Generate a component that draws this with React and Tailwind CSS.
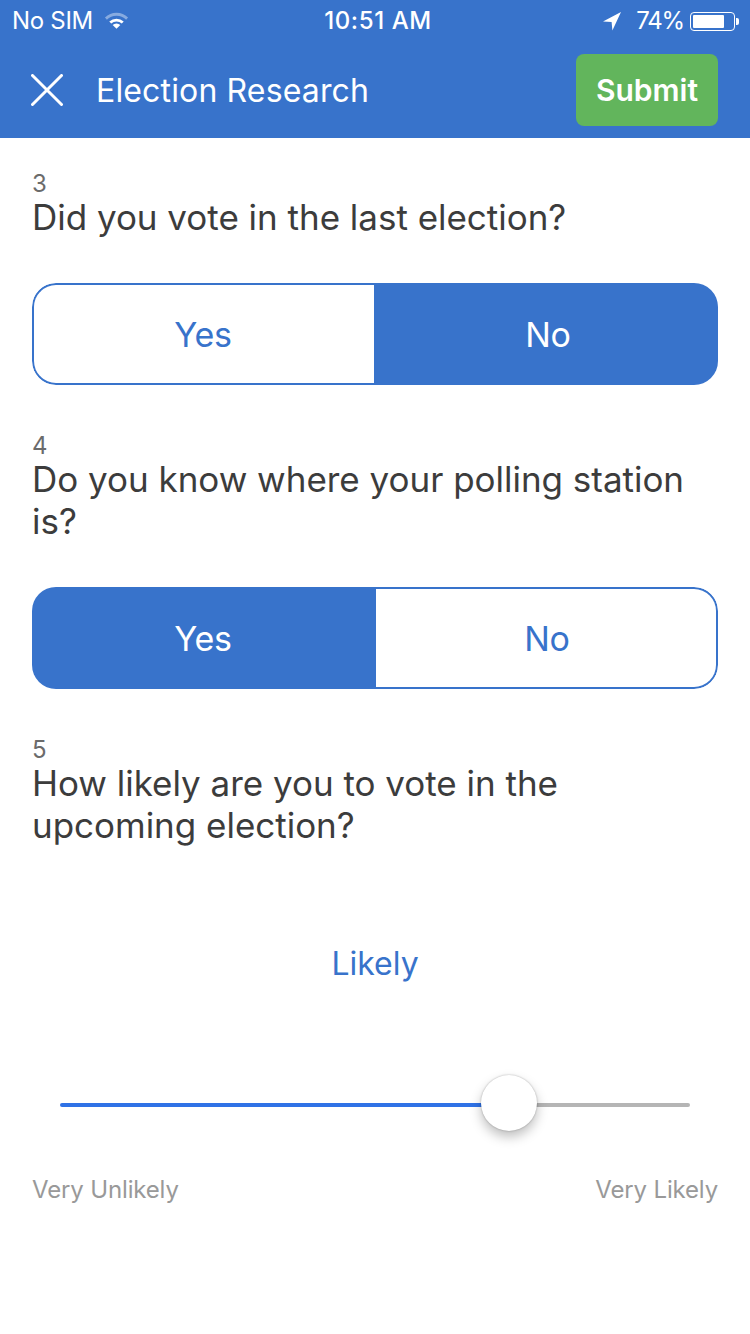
const FONT = "font-['Inter','Liberation_Sans',sans-serif]";

function Question({ num, children, className }) {
  return (
    <div className={className}>
      <div className="text-[24px] leading-[25px] text-[#6b6b6b]">{num}</div>
      <div className="text-[35px] leading-[42px] text-[#3c3c3c] tracking-[-0.02px]">{children}</div>
    </div>
  );
}

function Toggle({ selected, className }) {
  const on = "bg-[#3873cb] text-white";
  const off = "bg-white text-[#3873cb] border-2 border-[#3873cb]";
  const yesSide = selected === "yes" ? `w-[344px] pr-[2px] ${on}` : `w-[342px] pr-[2px] border-r-0 rounded-l-[24px] ${off}`;
  const noSide = selected === "yes" ? `pl-[2px] border-l-0 rounded-r-[24px] ${off}` : `pl-[4px] ${on}`;
  return (
    <div className={`flex h-[102px] rounded-[24px] overflow-hidden text-[34px] tracking-[-0.2px] ${className}`}>
      <div className={`flex items-center justify-center ${yesSide}`}>Yes</div>
      <div className={`flex-1 flex items-center justify-center ${noSide}`}>No</div>
    </div>
  );
}

export default function App() {
  return (
    <div className={`w-[750px] h-[1334px] bg-white overflow-hidden ${FONT}`}>
      <div className="bg-[#3873cb] h-[138px] text-white">
        <div className="h-[42px] relative flex items-center justify-between pl-[12px] pr-[11px] text-[24px]">
          <div className="flex items-center gap-[11px]">
            <span className="tracking-[-0.3px]">No SIM</span>
            <svg width="25" height="18" viewBox="0 0 26 18" className="mb-[2px]">
              <path d="M1 6.5a17 17 0 0 1 24 0l-2 2.2a14 14 0 0 0-20 0z" fill="#fff" fillOpacity="0.4" />
              <path d="M5.5 10.6a11 11 0 0 1 15 0l-2 2.1a8 8 0 0 0-11 0z" fill="#fff" />
              <path d="M9 14.2a5.6 5.6 0 0 1 8 0l-4 3.8z" fill="#fff" />
            </svg>
          </div>
          <div className="absolute left-0 right-0 text-center font-medium pointer-events-none tracking-[0.6px] pl-[6px]">10:51 AM</div>
          <div className="flex items-center gap-[6px]">
            <svg width="20" height="20" viewBox="0 0 20 20" className="mr-[8px] mb-[1px]">
              <path d="M19 1 1 10.5l8.6.4.8 8.6z" fill="#fff" />
            </svg>
            <span className="tracking-[-1.2px]">74%</span>
            <div className="flex items-center">
              <div className="w-[45px] h-[19px] border border-white rounded-[4px] p-[2px]">
                <div className="w-[31px] h-full bg-white rounded-[1px]"></div>
              </div>
              <div className="w-[3px] h-[7px] bg-white rounded-r-[2px] ml-[1px]"></div>
            </div>
          </div>
        </div>
        <div className="h-[96px] flex items-center pl-[31px] pr-[32px]">
          <svg width="32" height="32" viewBox="0 0 32 32" className="mr-[33px]">
            <path d="M1.5 1.5 30.5 30.5M30.5 1.5 1.5 30.5" stroke="#fff" strokeWidth="3" strokeLinecap="round" />
          </svg>
          <div className="flex-1 text-[32px] tracking-[0.15px] mt-[2px]">Election Research</div>
          <div className="w-[142px] h-[72px] bg-[#62b55c] rounded-[8px] flex items-center justify-center text-[30px] font-semibold">Submit</div>
        </div>
      </div>

      <div className="px-[32px]">
        <Question num="3" className="pt-[33px]">Did you vote in the last election?</Question>
        <Toggle selected="no" className="mt-[45px]" />
        <Question num="4" className="mt-[48px]">Do you know where your polling station is?</Question>
        <Toggle selected="yes" className="mt-[45px]" />
        <Question num="5" className="mt-[48px]">How likely are you to vote in the upcoming election?</Question>

        <div className="mt-[98px] text-center text-[32px] leading-[40px] text-[#3873cb]">Likely</div>

        <div className="mt-[93px] mx-[28px] h-[56px] flex items-center relative">
          <div className="w-[449px] h-[4px] bg-[#2f72e6] rounded-l-full"></div>
          <div className="flex-1 h-[4px] bg-[#b5b5b5] rounded-r-full"></div>
          <div className="absolute left-[421px] top-[-2px] w-[56px] h-[56px] rounded-full bg-white shadow-[0_6px_12px_rgba(0,0,0,0.25),0_0_2px_rgba(0,0,0,0.3)]"></div>
        </div>

        <div className="mt-[42px] flex justify-between text-[24px] leading-[30px] text-[#999999] tracking-[-0.15px]">
          <span>Very Unlikely</span>
          <span>Very Likely</span>
        </div>
      </div>
    </div>
  );
}
